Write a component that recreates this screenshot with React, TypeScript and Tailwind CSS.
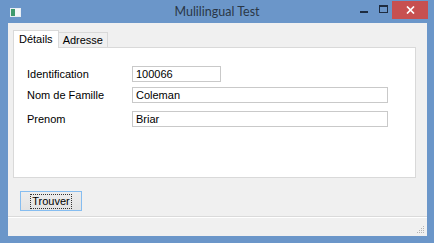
import React from "react";

export default function App() {
  const ui = { fontFamily: '"Liberation Sans", Arial, sans-serif' };
  return (
    <div className="w-[434px] h-[243px] bg-[#6b96c9] flex flex-col overflow-hidden" style={ui}>
      {/* Title bar */}
      <div className="h-[23px] flex items-start relative">
        <div className="pl-[10px] pt-[8px]">
          <svg width="11" height="9" viewBox="0 0 11 9">
            <rect x="0" y="0" width="11" height="9" fill="#e8eef4" />
            <rect x="1" y="1" width="4" height="7" fill="#3f9a6e" />
            <rect x="5" y="1" width="5" height="7" fill="#f4f6f8" />
          </svg>
        </div>
        <div
          className="absolute inset-x-0 top-0 text-center text-[12.5px] leading-[23px] text-[#2a3646] pointer-events-none"
          style={{ fontFamily: 'Lato, "Noto Sans", sans-serif' }}
        >
          Mulilingual Test
        </div>
        <div className="flex-1" />
        <div className="flex items-start h-[19px]">
          <div className="w-[20px] h-[18px] flex justify-center">
            <div className="w-[8px] h-[2px] bg-[#1e2c40] mt-[11px]" />
          </div>
          <div className="w-[18px] h-[18px] flex justify-center">
            <div className="w-[9px] h-[8px] border border-[#1e2c40] border-t-[2px] mt-[5px]" />
          </div>
          <div className="w-[36px] h-[18px] bg-[#c75050] mt-[1px] flex items-center justify-center mr-[6px]">
            <svg width="9" height="8" viewBox="0 0 9 8">
              <path d="M1 0.5 L8 7.5 M8 0.5 L1 7.5" stroke="#ffffff" strokeWidth="1.7" />
            </svg>
          </div>
        </div>
      </div>

      {/* Client area */}
      <div className="flex-1 ml-[8px] mr-[7px] mb-[7px] bg-[#f0f0f0] flex flex-col">
        {/* Tab control */}
        <div className="pl-[5px] pr-[11px] pt-[7px]">
          <div className="flex items-end h-[17px] text-[11px] text-black">
            <div className="relative z-10 h-[18px] px-[5px] bg-white border border-[#d9d9d9] border-b-0 flex items-center -mb-px">
              Détails
            </div>
            <div className="h-[15px] px-[4px] bg-[#f0f0f0] border border-[#d9d9d9] border-l-0 border-b-0 flex items-center">
              Adresse
            </div>
          </div>
          <div className="h-[131px] bg-white border border-[#d9d9d9] relative">
            <div className="pt-[18px] pl-[13px] flex flex-col text-[11px] text-black">
              <div className="flex items-center h-[16px]">
                <div className="w-[105px]">Identification</div>
                <div className="w-[89px] h-[16px] border border-[#c9c9c9] bg-white pl-[3px] leading-[14px]">100066</div>
              </div>
              <div className="flex items-center h-[16px] mt-[5px]">
                <div className="w-[105px]">Nom de Famille</div>
                <div className="w-[256px] h-[16px] border border-[#c9c9c9] bg-white pl-[3px] leading-[14px]">Coleman</div>
              </div>
              <div className="flex items-center h-[16px] mt-[8px]">
                <div className="w-[105px]">Prenom</div>
                <div className="w-[256px] h-[16px] border border-[#c9c9c9] bg-white pl-[3px] leading-[14px]">Briar</div>
              </div>
            </div>
          </div>
        </div>

        {/* Button */}
        <div className="pl-[12px] pt-[13px]">
          <div className="w-[62px] h-[20px] border border-[#86bdf0] bg-gradient-to-b from-[#ededed] to-[#e3e3e3] flex items-center justify-center">
            <span className="text-[11px] leading-[13px] px-[1px] border border-dotted border-[#333] text-black">
              Trouver
            </span>
          </div>
        </div>

        <div className="flex-1" />
        {/* Status strip */}
        <div className="h-[20px] border-t border-[#dadada] relative">
          <div className="border-t border-white" />
          <div className="absolute right-[2px] bottom-[2px]">
            <svg width="8" height="8" viewBox="0 0 8 8">
              <rect x="6" y="0" width="1" height="1" fill="#b4b4b4" />
              <rect x="4" y="2" width="1" height="1" fill="#b4b4b4" />
              <rect x="6" y="2" width="1" height="1" fill="#b4b4b4" />
              <rect x="2" y="4" width="1" height="1" fill="#b4b4b4" />
              <rect x="4" y="4" width="1" height="1" fill="#b4b4b4" />
              <rect x="6" y="4" width="1" height="1" fill="#b4b4b4" />
              <rect x="0" y="6" width="1" height="1" fill="#b4b4b4" />
              <rect x="2" y="6" width="1" height="1" fill="#b4b4b4" />
              <rect x="4" y="6" width="1" height="1" fill="#b4b4b4" />
              <rect x="6" y="6" width="1" height="1" fill="#b4b4b4" />
            </svg>
          </div>
        </div>
      </div>
    </div>
  );
}
